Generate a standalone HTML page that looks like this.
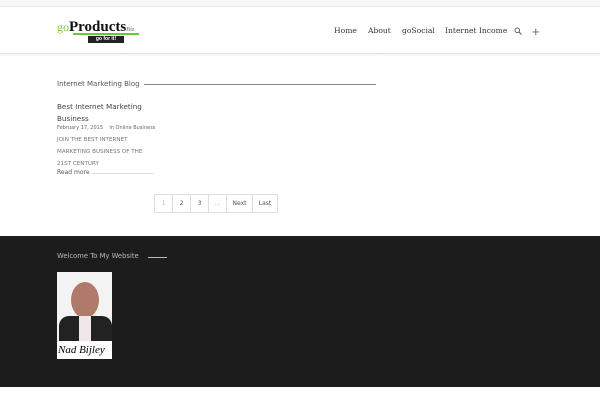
<!DOCTYPE html>
<html><head><style>
*{margin:0;padding:0;box-sizing:border-box}
body{width:600px;height:400px;background:#fff;font-family:"Liberation Sans",sans-serif;position:relative;overflow:hidden;color:#444}
.a{position:absolute}
</style></head><body>
<div class="a" style="left:0;top:0;width:600px;height:7px;background:#f7f7f7;border-bottom:1px solid #e8e8e8"></div>
<div class="a" style="left:0;top:53px;width:600px;height:3px;background:linear-gradient(#e2e2e2,#fff)"></div>
<div class="a" style="left:57px;top:19px;font:bold 15px 'Liberation Serif',serif;color:#111"><span style="color:#7c3;font-weight:normal;font-size:12px">go</span>Products<span style="font-size:6px;color:#99a">Biz</span></div>
<div class="a" style="left:73px;top:33px;width:66px;height:2px;background:#6c3"></div>
<div class="a" style="left:88px;top:36px;width:36px;height:7px;background:#222;color:#fff;font:bold 5px sans-serif;text-align:center;line-height:7px">go for it!</div>
<div class="a" style="top:26px;left:334px;font:7.6px 'DejaVu Serif',serif;color:#333;white-space:nowrap">
<span style="position:absolute;left:0">Home</span><span style="position:absolute;left:34px">About</span><span style="position:absolute;left:68px">goSocial</span><span style="position:absolute;left:111px">Internet Income</span></div>
<svg class="a" style="left:514px;top:27px" width="8" height="8"><circle cx="3.3" cy="3.3" r="2.3" fill="none" stroke="#666" stroke-width="1"/><path d="M5 5l2.5 2.5" stroke="#666" stroke-width="1.2"/></svg>
<div class="a" style="left:532px;top:24px;font:13px sans-serif;color:#666">+</div>
<div class="a" style="left:57px;top:80px;font:7px 'DejaVu Sans',sans-serif;color:#555">Internet Marketing Blog</div>
<div class="a" style="left:144px;top:84px;width:232px;height:1px;background:#888"></div>
<div class="a" style="left:57px;top:101px;font:7.2px/12px 'DejaVu Sans',sans-serif;color:#444">Best Internet Marketing<br>Business</div>
<div class="a" style="left:57px;top:125px;font:5px 'DejaVu Sans',sans-serif;color:#666">February 17, 2015 &nbsp;&nbsp; in Online Business</div>
<div class="a" style="left:57px;top:134px;font:5.6px/12px 'DejaVu Sans',sans-serif;color:#777">JOIN THE BEST INTERNET<br>MARKETING BUSINESS OF THE<br>21ST CENTURY</div>
<div class="a" style="left:57px;top:169px;font:6px 'DejaVu Sans',sans-serif;color:#555">Read more</div>
<div class="a" style="left:92px;top:173px;width:61px;height:1px;background:#ddd"></div>
<div class="a" style="left:154px;top:194px;height:19px;display:flex;border:1px solid #ddd;font:6px 'DejaVu Sans',sans-serif;color:#555">
<div style="width:18px;text-align:center;line-height:17px;color:#bbb;border-right:1px solid #ddd">1</div>
<div style="width:18px;text-align:center;line-height:17px;border-right:1px solid #ddd">2</div>
<div style="width:18px;text-align:center;line-height:17px;border-right:1px solid #ddd">3</div>
<div style="width:18px;text-align:center;line-height:17px;border-right:1px solid #ddd;color:#aaa">...</div>
<div style="width:26px;text-align:center;line-height:17px;border-right:1px solid #ddd">Next</div>
<div style="width:24px;text-align:center;line-height:17px">Last</div></div>
<div class="a" style="left:0;top:236px;width:600px;height:151px;background:#1c1c1c"></div>
<div class="a" style="left:57px;top:252px;font:6.8px 'DejaVu Sans',sans-serif;color:#bbb">Welcome To My Website</div>
<div class="a" style="left:148px;top:257px;width:19px;height:1px;background:#bbb"></div>
<div class="a" style="left:57px;top:272px;width:55px;height:87px;background:#f3f3f3;overflow:hidden">
<div class="a" style="left:14px;top:10px;width:28px;height:36px;border-radius:50%;background:#b07a6a"></div>
<div class="a" style="left:2px;top:44px;width:53px;height:26px;background:#222;border-radius:10px 10px 0 0"></div>
<div class="a" style="left:22px;top:44px;width:12px;height:26px;background:#f0e8e8"></div>
<div class="a" style="left:0;top:69px;width:55px;height:18px;background:#fff;color:#000;font:italic 11px 'Liberation Serif',serif;padding-left:1px;line-height:18px">Nad Bijley</div>
</div>
</body></html>
